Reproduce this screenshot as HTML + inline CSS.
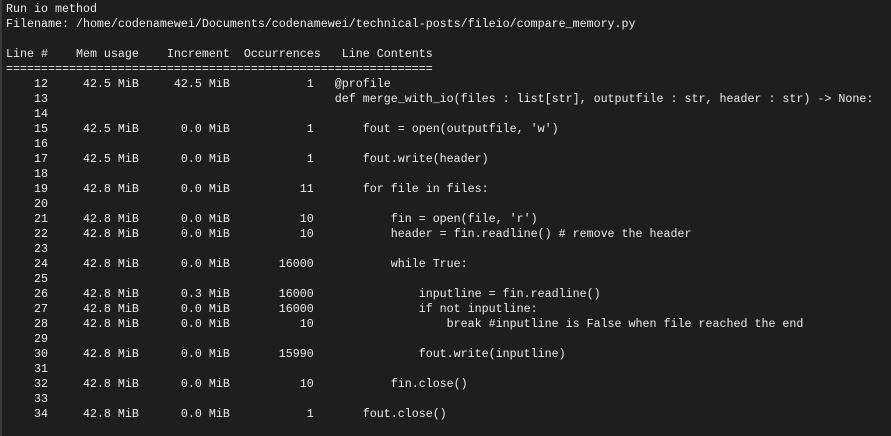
<!DOCTYPE html>
<html><head><style>
html,body{margin:0;padding:0;background:#1e1e1e;width:891px;height:436px;overflow:hidden}
.l{position:absolute;left:0;top:0;width:2px;height:436px;background:#3a3a3a}
pre{position:absolute;left:6px;top:2px;margin:0;font-family:"Liberation Mono",monospace;font-size:11.67px;line-height:15px;color:#ececec}
</style></head><body><div class="l"></div><pre>Run io method
Filename: /home/codenamewei/Documents/codenamewei/technical-posts/fileio/compare_memory.py

Line #    Mem usage    Increment  Occurrences   Line Contents
=============================================================
    12     42.5 MiB     42.5 MiB           1   @profile
    13                                         def merge_with_io(files : list[str], outputfile : str, header : str) -> None:
    14
    15     42.5 MiB      0.0 MiB           1       fout = open(outputfile, 'w')
    16
    17     42.5 MiB      0.0 MiB           1       fout.write(header)
    18
    19     42.8 MiB      0.0 MiB          11       for file in files:
    20
    21     42.8 MiB      0.0 MiB          10           fin = open(file, 'r')
    22     42.8 MiB      0.0 MiB          10           header = fin.readline() # remove the header
    23
    24     42.8 MiB      0.0 MiB       16000           while True:
    25
    26     42.8 MiB      0.3 MiB       16000               inputline = fin.readline()
    27     42.8 MiB      0.0 MiB       16000               if not inputline:
    28     42.8 MiB      0.0 MiB          10                   break #inputline is False when file reached the end
    29
    30     42.8 MiB      0.0 MiB       15990               fout.write(inputline)
    31
    32     42.8 MiB      0.0 MiB          10           fin.close()
    33
    34     42.8 MiB      0.0 MiB           1       fout.close()
</pre></body></html>
